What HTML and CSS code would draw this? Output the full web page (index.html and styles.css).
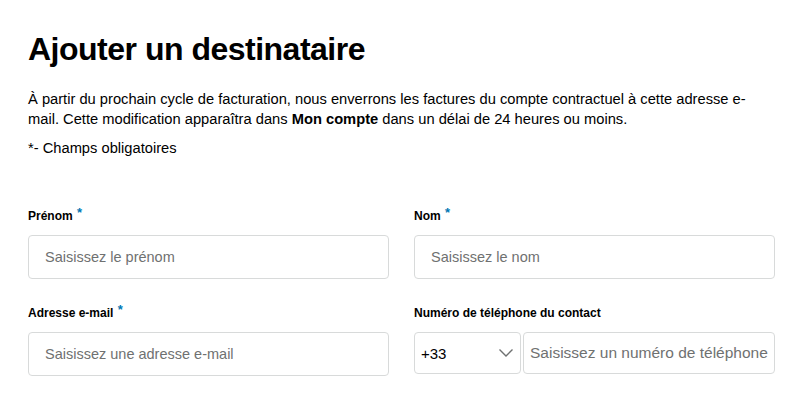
FILE: index.html
```html
<!DOCTYPE html>
<html lang="fr">
<head>
<meta charset="utf-8">
<title>Ajouter un destinataire</title>
<link rel="stylesheet" href="styles.css">
</head>
<body>
<main class="page">
  <h1 class="title">Ajouter un destinataire</h1>
  <p class="intro">À partir du prochain cycle de facturation, nous enverrons les factures du compte contractuel à cette adresse e-mail. Cette modification apparaîtra dans <strong>Mon compte</strong> dans un délai de 24 heures ou moins.</p>
  <p class="note">*- Champs obligatoires</p>
  <form class="form">
    <div class="field">
      <label class="label">Prénom <span class="req">*</span></label>
      <div class="input"><span class="ph">Saisissez le prénom</span></div>
    </div>
    <div class="field">
      <label class="label">Nom <span class="req">*</span></label>
      <div class="input"><span class="ph">Saisissez le nom</span></div>
    </div>
    <div class="field">
      <label class="label">Adresse e-mail <span class="req">*</span></label>
      <div class="input"><span class="ph">Saisissez une adresse e-mail</span></div>
    </div>
    <div class="field">
      <label class="label">Numéro de téléphone du contact</label>
      <div class="phone">
        <div class="select">
          <span class="code">+33</span>
          <svg class="chev" width="16" height="10" viewBox="0 0 16 10"><path d="M1.5 1.5 L8 8 L14.5 1.5" fill="none" stroke="#6f7171" stroke-width="1.4"/></svg>
        </div>
        <div class="input tel"><span class="ph ph-tel">Saisissez un numéro de téléphone</span></div>
      </div>
    </div>
  </form>
</main>
</body>
</html>
```
FILE: styles.css
```css
html, body {
  margin: 0;
  padding: 0;
  background: #ffffff;
}
body {
  font-family: "Liberation Sans", Arial, sans-serif;
  color: #000000;
}
.page {
  padding: 30px 33px 0 28px;
  width: 747px;
}
.title {
  margin: 0;
  font-size: 32px;
  line-height: 38px;
  font-weight: 700;
  letter-spacing: -0.5px;
}
.intro {
  margin: 21px 0 0;
  font-size: 14.7px;
  line-height: 20px;
  color: #000;
}
.intro strong {
  font-weight: 700;
}
.note {
  margin: 9px 0 0;
  font-size: 14.7px;
  line-height: 20px;
}
.form {
  margin-top: 50px;
  display: grid;
  grid-template-columns: 1fr 1fr;
  column-gap: 25px;
  row-gap: 26px;
}
.field {
  display: flex;
  flex-direction: column;
}
.label {
  font-size: 12px;
  line-height: 16px;
  font-weight: 700;
  margin-bottom: 11px;
}
.req {
  color: #0077b4;
  font-size: 13px;
  position: relative;
  top: -3px;
  margin-left: 1px;
}
.input {
  box-sizing: border-box;
  height: 44px;
  border: 1px solid #d8dada;
  border-radius: 4px;
  display: flex;
  align-items: center;
  padding: 0 16px;
}
.ph {
  font-size: 14.5px;
  color: #6f7171;
  white-space: nowrap;
}
.ph-tel {
  font-size: 15.5px;
}
.phone {
  display: flex;
  gap: 2px;
  height: 42px;
}
.select {
  box-sizing: border-box;
  width: 107px;
  height: 42px;
  border: 1px solid #d8dada;
  border-radius: 4px;
  display: flex;
  align-items: center;
  justify-content: space-between;
  padding: 0 6px 0 6px;
}
.code {
  font-size: 15px;
  color: #000;
}
.tel {
  flex: 1;
  height: 42px;
  padding: 0 2px 0 6px;
  overflow: hidden;
}
```
